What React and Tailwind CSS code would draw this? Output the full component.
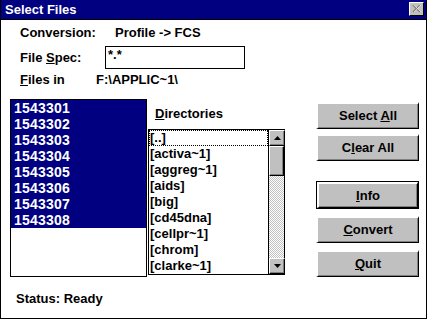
import React from "react";

const files = ["1543301", "1543302", "1543303", "1543304", "1543305", "1543306", "1543307", "1543308"];
const dirs = ["[..]", "[activa~1]", "[aggreg~1]", "[aids]", "[big]", "[cd45dna]", "[cellpr~1]", "[chrom]", "[clarke~1]"];

const Btn = ({ children, isDefault, className = "" }) => (
  <div
    className={`w-[103px] ${isDefault ? "h-[28px] border border-black" : "h-[27px]"} ${className}`}
  >
    <div className="h-full w-full bg-[#c0c0c0] border-t-2 border-l-2 border-t-white border-l-white border-b border-r border-b-black border-r-black shadow-[inset_-1px_-1px_0_#808080] flex items-center justify-center text-[13px] font-bold text-black">
      <span>{children}</span>
    </div>
  </div>
);

const Arrow = ({ down }) => (
  <div className="h-4 w-4 bg-[#c0c0c0] border-t border-l border-t-white border-l-white border-b border-r border-b-black border-r-black shadow-[inset_-1px_-1px_0_#808080] flex items-center justify-center">
    <svg width="7" height="4" viewBox="0 0 7 4">
      {down ? <polygon points="0,0 7,0 3.5,4" fill="black" /> : <polygon points="0,4 7,4 3.5,0" fill="black" />}
    </svg>
  </div>
);

export default function App() {
  return (
    <div className="w-[429px] h-[321px] bg-white font-['Liberation_Sans',Arial,sans-serif] text-black">
      <div className="w-[427px] h-[319px] border-l border-r border-b border-black flex flex-col">
        {/* title bar */}
        <div className="h-5 bg-[#000080] border-b border-black flex items-center justify-between pl-[4px] pr-[2px]">
          <span className="text-white text-[13px] font-bold leading-none">Select Files</span>
          <div className="w-[15px] h-[14px] bg-[#c0c0c0] border-t border-l border-t-white border-l-white border-b border-r border-b-black border-r-black flex items-center justify-center mb-[1px]">
            <svg width="9" height="8" viewBox="0 0 9 8">
              <path d="M1 0 L8 7 M8 0 L1 7" stroke="#808080" strokeWidth="1.5" />
              <path d="M2 0 L9 7 M9 0 L2 7" stroke="white" strokeWidth="0.6" />
            </svg>
          </div>
        </div>

        {/* header rows */}
        <div className="pl-[19px] text-[13px] font-bold">
          <div className="mt-[5px] h-4 leading-4 flex">
            <span className="w-[95px]">Conversion:</span>
            <span>Profile -&gt; FCS</span>
          </div>
          <div className="mt-[5px] h-[23px] flex items-center">
            <span className="w-[85px]">
              File <span className="underline">S</span>pec:
            </span>
            <div className="w-[140px] h-[23px] border border-black px-[2px] leading-[16px]">*.*</div>
          </div>
          <div className="mt-[3px] h-4 leading-4 flex">
            <span className="w-[76px]">
              <span className="underline">F</span>iles in
            </span>
            <span>F:\APPLIC~1\</span>
          </div>
        </div>

        {/* lists and buttons */}
        <div className="mt-[11px] flex text-[13px] font-bold">
          <div className="ml-[9px] w-[137px] h-[178px] border border-black bg-white">
            {files.map((f) => (
              <div key={f} className="h-4 leading-4 bg-[#000080] text-white pl-[3px] text-[14px] tracking-[0.2px]">
                {f}
              </div>
            ))}
          </div>

          <div className="ml-[1px] flex flex-col">
            <div className="h-[30px] leading-[30px] pl-[7px]">
              <span className="underline">D</span>irectories
            </div>
            <div className="w-[137px] h-[146px] border border-black flex">
              <div className="flex-1">
                {dirs.map((d, i) => (
                  <div
                    key={d}
                    className={`h-4 leading-4 pl-[1px] ${i === 0 ? "outline outline-1 outline-dotted outline-black -outline-offset-1" : ""}`}
                  >
                    {d}
                  </div>
                ))}
              </div>
              <div className="w-4 flex flex-col border-l border-black">
                <Arrow />
                <div className="h-[30px] bg-[#c0c0c0] border-t border-l border-t-white border-l-white border-b border-r border-b-black border-r-black shadow-[inset_-1px_-1px_0_#808080]" />
                <div className="flex-1 bg-[repeating-conic-gradient(#c0c0c0_0_25%,#ffffff_0_50%)] bg-[length:2px_2px]" />
                <Arrow down />
              </div>
            </div>
          </div>

          <div className="ml-[31px] flex flex-col">
            <Btn className="mt-[3px]">
              Select <span className="underline">A</span>ll
            </Btn>
            <Btn className="mt-[5px]">
              C<span className="underline">l</span>ear All
            </Btn>
            <Btn isDefault className="mt-[20px]">
              <span className="underline">I</span>nfo
            </Btn>
            <Btn className="mt-[7px]">
              <span className="underline">C</span>onvert
            </Btn>
            <Btn className="mt-[7px]">
              <span className="underline">Q</span>uit
            </Btn>
          </div>
        </div>

        <div className="mt-[14px] pl-[15px] text-[13px] font-bold h-4 leading-4">Status: Ready</div>
      </div>
    </div>
  );
}
